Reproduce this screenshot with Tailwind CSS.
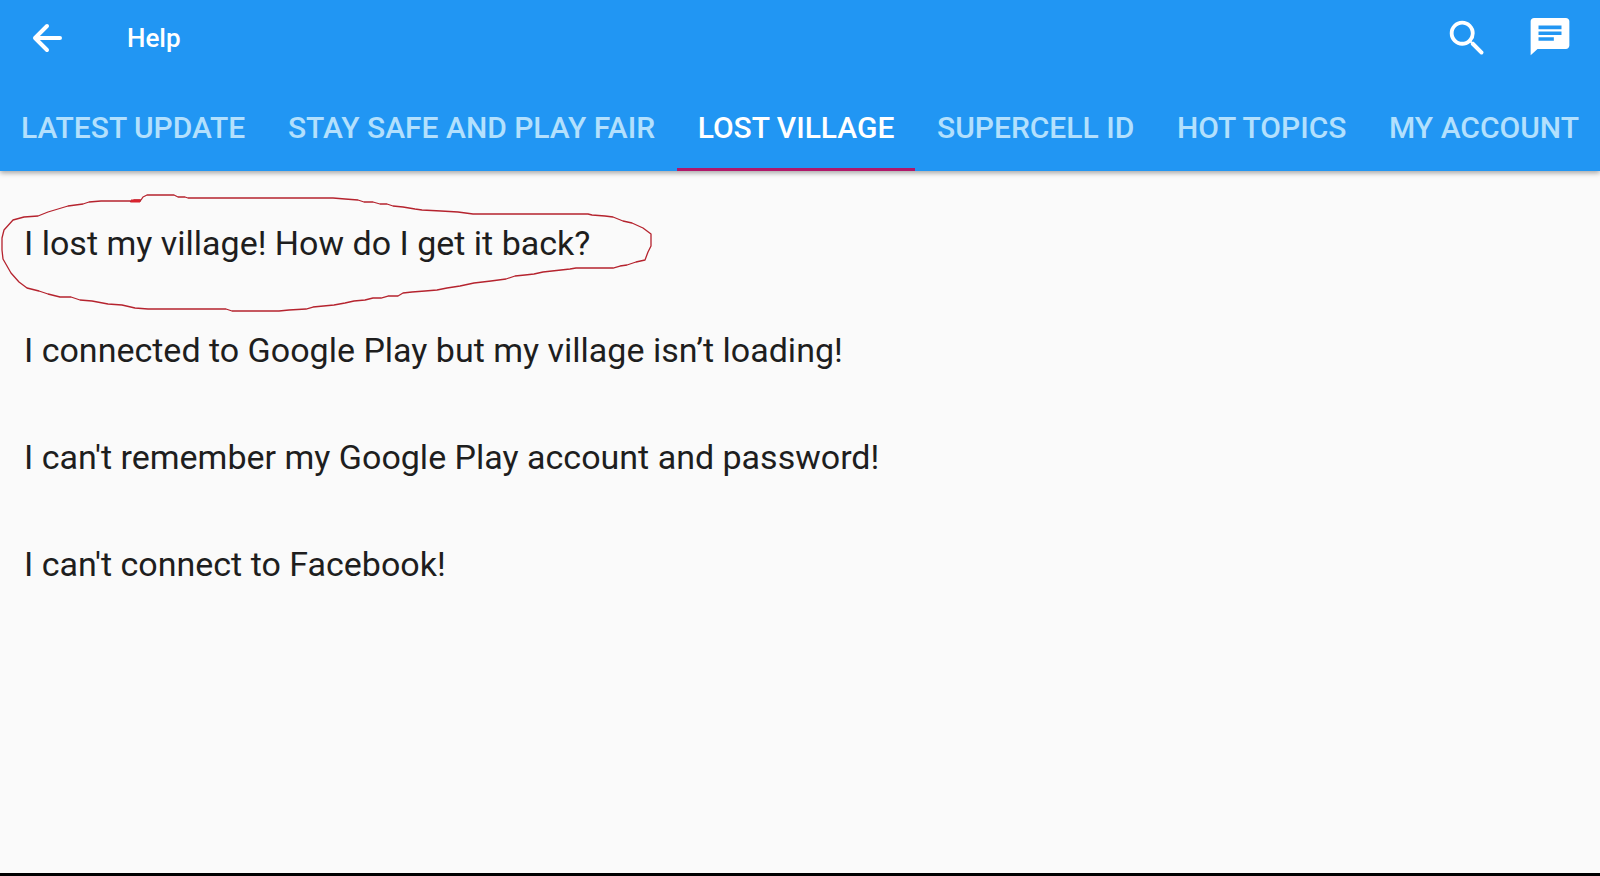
<!DOCTYPE html>
<html lang="en">
<head>
    <meta charset="UTF-8">
    <meta name="viewport" content="width=device-width, initial-scale=1.0">
    <title>Help</title>
    <script src="https://cdn.jsdelivr.net/npm/@tailwindcss/browser@4"></script>
</head>
<body class="min-h-screen flex flex-col bg-[#fafafa] font-[Roboto,sans-serif] text-[#1e1e1e]">

    <!-- App bar -->
    <header class="bg-[#2196f3] text-white shadow-[0_2px_5px_rgba(0,0,0,0.35)]">
        <div class="h-[76px] flex items-center pl-[24px] pr-[26px]">
            <button type="button" aria-label="Back" class="size-[46px] flex items-center justify-center">
                <svg class="size-[46px]" viewBox="0 0 46 46" fill="none" stroke="currentColor" stroke-width="4" stroke-linecap="round" stroke-linejoin="round">
                    <path d="M36 23H11M23 11L11 23L23 35"/>
                </svg>
            </button>
            <h1 class="ml-[57px] text-[26px] font-medium">Help</h1>
            <div class="ml-auto flex items-center gap-[35px]">
                <button type="button" aria-label="Search" class="size-[48px] flex items-center justify-center">
                    <svg class="size-[46px]" viewBox="0 0 24 24" fill="currentColor">
                        <path d="M15.5 14h-.79l-.28-.27A6.47 6.47 0 0 0 16 9.5 6.5 6.5 0 1 0 9.5 16c1.61 0 3.09-.59 4.23-1.57l.27.28v.79l5 4.99Q19.700 20.900 20.300 20.300Q20.900 19.700 20.490 19l-4.99-5zm-6 0C7.010 14 5 11.990 5 9.500S7.010 5 9.500 5 14 7.010 14 9.500 11.990 14 9.500 14z"/>
                    </svg>
                </button>
                <button type="button" aria-label="Messages" class="size-[48px] flex items-center justify-center">
                    <svg class="size-[46px]" viewBox="0 0 24 24" fill="currentColor">
                        <path d="M20.300 1.500H3.700C2.700 1.500 1.900 2.300 1.900 3.300V21L5.500 17.700H20.300C21.300 17.700 22.100 16.900 22.100 15.900V3.300C22.100 2.300 21.300 1.500 20.300 1.500zM6 8.600H18V10.400H6V8.600zM14 13.400H6V11.600H14V13.400zM18 7.400H6V5.500H18V7.400z"/>
                    </svg>
                </button>
            </div>
        </div>

        <!-- Category tabs -->
        <nav class="flex justify-between pt-[9px] text-[30px] leading-[86px] font-medium text-[#b3e0fd] whitespace-nowrap overflow-hidden">
            <a href="#" class="px-[21px]">LATEST UPDATE</a>
            <a href="#" class="px-[21px]">STAY SAFE AND PLAY FAIR</a>
            <a href="#" aria-current="page" class="px-[21px] text-white shadow-[inset_0_-3px_0_#b0186a]">LOST VILLAGE</a>
            <a href="#" class="px-[21px]">SUPERCELL ID</a>
            <a href="#" class="px-[21px]">HOT TOPICS</a>
            <a href="#" class="px-[21px]">MY ACCOUNT</a>
        </nav>
    </header>

    <!-- Questions -->
    <main class="grow pt-[19px]">
        <ul class="text-[34px] leading-[107px]">
            <li class="relative">
                <a href="#" class="block px-[24px]">I lost my village! How do I get it back?</a>
                <!-- Hand-drawn marker -->
                <svg class="absolute left-0 top-0 w-[655px] h-[125px] pointer-events-none" viewBox="0 190 655 125" fill="none" stroke="#b5232e" stroke-width="1.300" stroke-linejoin="round">
                    <path d="M130 202L134 200L141 200L143 197L147 195H174L178 197L185 197L188 198H333L345 199L358 200L364 202L373 202L380 204L387 204L393 206L403 207L415 209L422 210L441 211L458 212L473 214H588L592 215L605 216L613 217L623 221L632 223L643 228L651 234V246L648 252L645 260L636 262L627 265L620 266L613 268H576L570 269L561 270L552 271L543 272L534 274L525 275L515 276L506 279L491 281L474 283L460 286L447 288L437 290L425 291L412 292L403 293L398 296L388 296L381 298L373 298L365 300L354 301L345 303L334 305L313 307L306 309L289 310L279 311H232L226 309H148L135 308L122 305L108 304L92 301L80 300L71 297H60L48 294L39 291L27 288L19 282L11 273L3 259L2 250V238L4 230L13 220L24 217L38 216L48 212L68 206L83 204L89 202L101 201H141"/>
                    <path d="M131 201L140 201" stroke="#d8232e" stroke-width="3"/>
                </svg>
            </li>
            <li><a href="#" class="block px-[24px]">I connected to Google Play but my village isn’t loading!</a></li>
            <li><a href="#" class="block px-[24px]">I can't remember my Google Play account and password!</a></li>
            <li><a href="#" class="block px-[24px]">I can't connect to Facebook!</a></li>
        </ul>
    </main>

    <footer class="h-[3px] bg-black"></footer>

</body>
</html>
